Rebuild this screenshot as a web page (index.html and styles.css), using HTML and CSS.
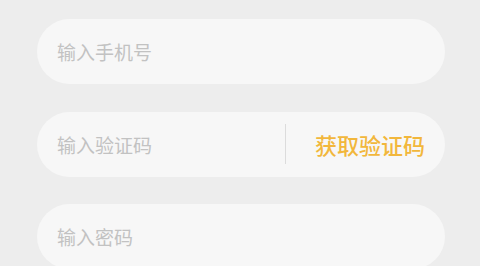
FILE: index.html
```html
<!DOCTYPE html>
<html lang="zh-CN">
<head>
<meta charset="utf-8">
<link rel="stylesheet" href="styles.css">
</head>
<body>
<div class="form">
  <div class="field"><span class="placeholder">输入手机号</span></div>
  <div class="field">
    <span class="placeholder grow">输入验证码</span>
    <span class="divider"></span>
    <span class="code-btn">获取验证码</span>
  </div>
  <div class="field"><span class="placeholder">输入密码</span></div>
</div>
</body>
</html>
```
FILE: styles.css
```css
html, body {
  margin: 0;
  padding: 0;
  background: #ededed;
  font-family: "Noto Sans CJK SC", "Noto Sans", sans-serif;
}
.form {
  display: flex;
  flex-direction: column;
  gap: 27.5px;
  padding: 19px 35px 0 37px;
}
.field {
  height: 65px;
  border-radius: 32.5px;
  background: #f7f7f7;
  display: flex;
  align-items: center;
  padding: 0 20px 0 20px;
}
.placeholder {
  font-size: 19px;
  color: #c2c2c2;
}
.grow {
  flex: 1;
}
.divider {
  width: 1px;
  height: 40px;
  background: #dcdcdc;
  margin-right: 29px;
}
.code-btn {
  font-size: 22px;
  color: #f2b73c;
  font-weight: 500;
}
```
